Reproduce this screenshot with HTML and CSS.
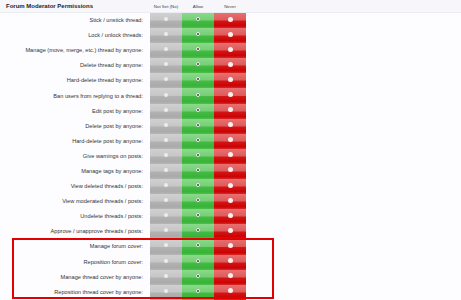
FILE: index.html
```html
<!DOCTYPE html>
<html>
<head>
<meta charset="utf-8">
<link rel="stylesheet" href="styles.css">
</head>
<body>
<div class="page">
  <div class="head">
    <div class="title">Forum Moderator Permissions</div>
    <div class="colhead">Not Set (No)</div>
    <div class="colhead">Allow</div>
    <div class="colhead">Never</div>
  </div>
  <div class="rows">
    <div class="row"><div class="label">Stick / unstick thread:</div><div class="cell ns"><i></i></div><div class="cell al"><i></i></div><div class="cell nv"><i></i></div></div>
    <div class="row"><div class="label">Lock / unlock threads:</div><div class="cell ns"><i></i></div><div class="cell al"><i></i></div><div class="cell nv"><i></i></div></div>
    <div class="row"><div class="label">Manage (move, merge, etc.) thread by anyone:</div><div class="cell ns"><i></i></div><div class="cell al"><i></i></div><div class="cell nv"><i></i></div></div>
    <div class="row"><div class="label">Delete thread by anyone:</div><div class="cell ns"><i></i></div><div class="cell al"><i></i></div><div class="cell nv"><i></i></div></div>
    <div class="row"><div class="label">Hard-delete thread by anyone:</div><div class="cell ns"><i></i></div><div class="cell al"><i></i></div><div class="cell nv"><i></i></div></div>
    <div class="row"><div class="label">Ban users from replying to a thread:</div><div class="cell ns"><i></i></div><div class="cell al"><i></i></div><div class="cell nv"><i></i></div></div>
    <div class="row"><div class="label">Edit post by anyone:</div><div class="cell ns"><i></i></div><div class="cell al"><i></i></div><div class="cell nv"><i></i></div></div>
    <div class="row"><div class="label">Delete post by anyone:</div><div class="cell ns"><i></i></div><div class="cell al"><i></i></div><div class="cell nv"><i></i></div></div>
    <div class="row"><div class="label">Hard-delete post by anyone:</div><div class="cell ns"><i></i></div><div class="cell al"><i></i></div><div class="cell nv"><i></i></div></div>
    <div class="row"><div class="label">Give warnings on posts:</div><div class="cell ns"><i></i></div><div class="cell al"><i></i></div><div class="cell nv"><i></i></div></div>
    <div class="row"><div class="label">Manage tags by anyone:</div><div class="cell ns"><i></i></div><div class="cell al"><i></i></div><div class="cell nv"><i></i></div></div>
    <div class="row"><div class="label">View deleted threads / posts:</div><div class="cell ns"><i></i></div><div class="cell al"><i></i></div><div class="cell nv"><i></i></div></div>
    <div class="row"><div class="label">View moderated threads / posts:</div><div class="cell ns"><i></i></div><div class="cell al"><i></i></div><div class="cell nv"><i></i></div></div>
    <div class="row"><div class="label">Undelete threads / posts:</div><div class="cell ns"><i></i></div><div class="cell al"><i></i></div><div class="cell nv"><i></i></div></div>
    <div class="row"><div class="label">Approve / unapprove threads / posts:</div><div class="cell ns"><i></i></div><div class="cell al"><i></i></div><div class="cell nv"><i></i></div></div>
    <div class="row"><div class="label">Manage forum cover:</div><div class="cell ns"><i></i></div><div class="cell al"><i></i></div><div class="cell nv"><i></i></div></div>
    <div class="row"><div class="label">Reposition forum cover:</div><div class="cell ns"><i></i></div><div class="cell al"><i></i></div><div class="cell nv"><i></i></div></div>
    <div class="row"><div class="label">Manage thread cover by anyone:</div><div class="cell ns"><i></i></div><div class="cell al"><i></i></div><div class="cell nv"><i></i></div></div>
    <div class="row"><div class="label">Reposition thread cover by anyone:</div><div class="cell ns"><i></i></div><div class="cell al"><i></i></div><div class="cell nv"><i></i></div></div>
  </div>
  <div class="highlight"></div>
</div>
</body>
</html>
```
FILE: styles.css
```css
html, body {
  margin: 0;
  padding: 0;
  background: #fdfdff;
}
.page {
  position: relative;
  width: 461px;
  height: 300px;
  overflow: hidden;
  font-family: "Liberation Sans", Arial, sans-serif;
  color: #333;
}
.head {
  display: grid;
  grid-template-columns: 150px 32px 32px 32px 1fr;
  height: 12px;
  align-items: center;
  background: #f7f7fb;
  border-bottom: 1px solid #ebebf2;
}
.title {
  font-weight: bold;
  font-size: 6px;
  padding-left: 6px;
  color: #222;
}
.colhead {
  font-size: 4.4px;
  text-align: center;
  color: #444;
}
.rows {
  display: flex;
  flex-direction: column;
}
.row {
  display: grid;
  grid-template-columns: 150px 32px 32px 32px;
  height: 15.1px;
}
.label {
  font-size: 5.65px;
  text-align: right;
  padding-right: 7px;
  align-self: center;
  margin-bottom: 1px;
  color: #333;
  white-space: nowrap;
}
.cell {
  display: flex;
  align-items: center;
  justify-content: center;
}
.ns {
  background: linear-gradient(#d0d0d0 0%, #c6c6c6 48%, #b2b2b2 52%, #aaaaaa 85%, #b6b6b6 100%);
}
.al {
  background: linear-gradient(#8bd98b 0%, #74cf74 48%, #45bb45 52%, #38b338 85%, #4fbf4f 100%);
}
.nv {
  background: linear-gradient(#e87070 0%, #de5a5a 48%, #d21616 52%, #cc0202 85%, #d52a2a 100%);
}
.cell i {
  display: block;
  border-radius: 50%;
  margin-bottom: 3px;
}
.ns i {
  width: 4px;
  height: 4px;
  background: #ececec;
}
.al i {
  width: 2px;
  height: 2px;
  background: #333;
  border: 1px solid #f4f4f4;
}
.nv i {
  width: 5px;
  height: 5px;
  background: #fbeeee;
}
.highlight {
  position: absolute;
  left: 12px;
  top: 238px;
  width: 258px;
  height: 57px;
  border: 2px solid #e20000;
}
```
